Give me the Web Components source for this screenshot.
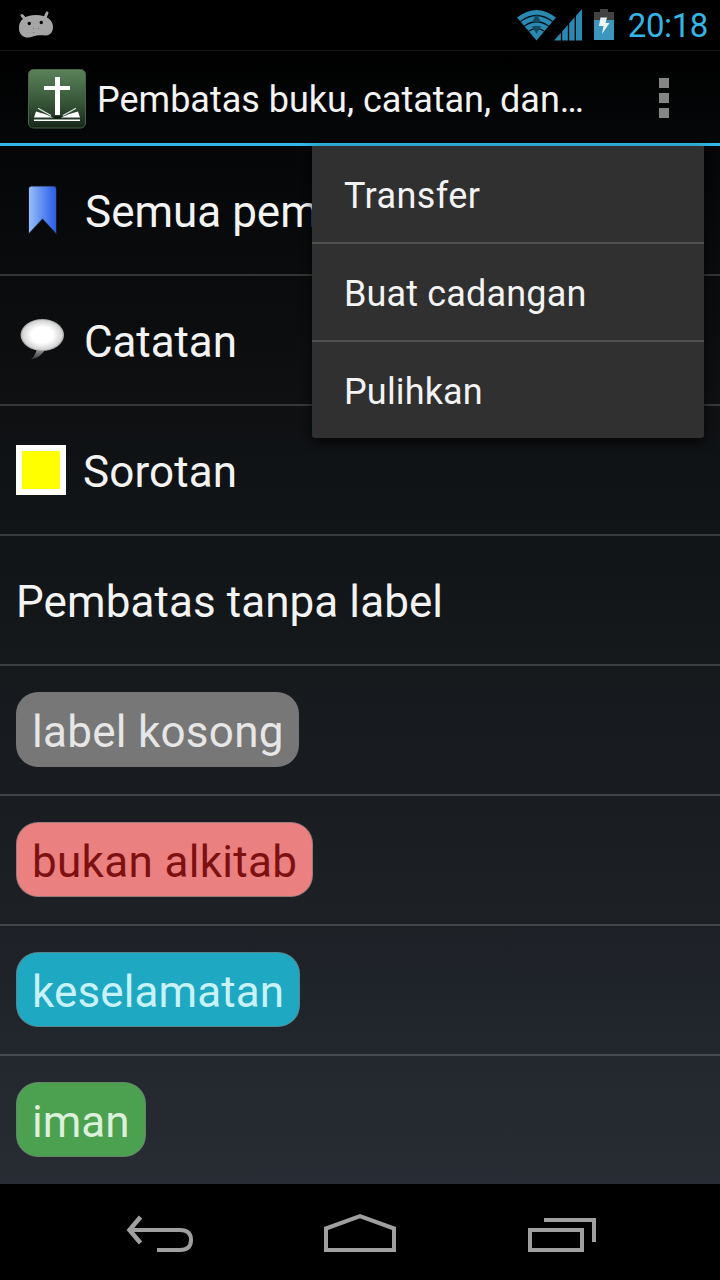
<!DOCTYPE html>
<html lang="id">
<head>
<meta charset="utf-8">
<title>Pembatas buku, catatan, dan sorotan</title>
<style>
html,body{margin:0;padding:0;background:#000}
body{width:720px;height:1280px;overflow:hidden;font-family:Roboto,"Noto Sans",sans-serif;color:#f3f3f3}
</style>
</head>
<body>
<bookmark-screen></bookmark-screen>
<script>
function define(name, html){
  const t=document.createElement('template');
  t.innerHTML=html;
  customElements.define(name,class extends HTMLElement{
    constructor(){super();this.attachShadow({mode:'open'}).append(t.content.cloneNode(true));}
  });
}

define('status-bar',`<style>
:host{display:flex;height:50px;align-items:flex-start;justify-content:space-between;background:#000;color:#33b5e5}
svg{display:block}
.right{display:flex}
time{font-size:33px;line-height:38px;margin:7px 12px 0 8px;letter-spacing:-.4px}
</style>
<svg width="60" height="50" viewBox="0 0 60 50"><g fill="#a5a5a5"><path d="M19 29C18.500 20 25 15 36 15C47 15 53 20 53 27C53 32 50 36 45 35.500C40 35 36 35.500 33 36.500C26 39.500 19.500 36 19 29Z"/><path d="M22 15.500L26 20M47 13L44.500 19" stroke="#a5a5a5" stroke-width="3" stroke-linecap="round"/></g><circle cx="29.300" cy="23.500" r="1.700"/><circle cx="41.300" cy="22.500" r="1.700"/><g fill="#777"><rect x="33" y="28" width="1" height="1"/><rect x="38" y="28" width="1" height="1"/><rect x="33" y="32" width="1" height="1"/></g></svg>
<div class="right">
<svg width="108" height="50" viewBox="512 0 108 50">
<path d="M517 17.500Q536.500 2.500 556 17.500L536.500 40.500Z" fill="#2989b1"/>
<g fill="none" stroke="#031017" stroke-width="1.300"><path d="M520.500 21.500Q536.500 9.500 552.500 21.500"/><path d="M524.500 26Q536.500 17.500 548.500 26"/><path d="M529 31Q536.500 26 544 31"/></g>
<path d="M536.500 14L541 22H532ZM532 26H541L536.500 34Z" fill="#144b62"/>
<path d="M554 40.500L582 9V40.500Z" fill="#2989b1"/><path d="M561.500 25V41M568.500 20V41M575.300 10V41" stroke="#000" stroke-width="1.300"/>
<path d="M600 9H608V12H614V20H594V12H600Z" fill="#424242"/><path d="M594 20H614V40H594Z" fill="#3d96bd"/><path d="M600.500 17.500H607L605.500 23H609.500L602 34L603.500 26H599Z" fill="#eef5f8"/>
</svg><time>20:18</time></div>`);

define('app-icon',`<style>:host{display:block;width:60px;height:62px;margin-top:4px}svg{display:block}</style>
<svg width="60" height="62" viewBox="27 68 60 62"><defs><linearGradient id="g" x2="0" y2="1"><stop offset="0" stop-color="#5a8259"/><stop offset=".5" stop-color="#3b5b3c"/><stop offset="1" stop-color="#182719"/></linearGradient></defs>
<rect x="28.500" y="69.500" width="57" height="58.500" rx="5" fill="url(#g)" stroke="#4b604b"/>
<path d="M55 77H60V86H70V90H60V115H55V90H44V86H55Z" fill="#fff"/>
<path d="M53 116.500H62L60 118.500H55Z" fill="#0c150c"/>
<path d="M36 111.500Q45 113.500 53 117.500H34ZM78 111.500Q69 113.500 61 117.500H80Z" fill="#fff"/><path d="M38 108.300L51 115.500M76 108.300L63 115.500" stroke="#dfe6df" stroke-width="1.300"/><path d="M34 120.300H80" stroke="#fff" stroke-width="1.500"/></svg>`);

define('action-bar',`<style>
:host{display:flex;box-sizing:border-box;height:96px;align-items:center;padding:0 50px 0 27px;border-top:1px solid #151515;border-bottom:3px solid #33b5e5;background:linear-gradient(#000,#050708)}
h1{flex:1;margin:6px 0 0 10px;font-size:36px;line-height:44px;font-weight:400;white-space:nowrap}
.more{display:grid;gap:5px;width:10px;margin:2px 1px 0 0}
.more i{width:10px;height:10px;background:#858585}
</style><app-icon></app-icon><h1><slot></slot></h1><div class="more"><i></i><i></i><i></i></div>`);

define('list-row',`<style>
:host{display:flex;box-sizing:border-box;height:130px;padding:0 16px;align-items:center;font-size:44px;line-height:52px;white-space:nowrap;border-bottom:2px solid #ffffff2b}
:host(:last-of-type){border-bottom-color:transparent}
.t{padding-top:4px}
</style><slot name="icon"></slot><span class="t"><slot></slot></span>`);

define('label-chip',`<style>
:host{display:block;box-sizing:border-box;height:75px;padding:13px 15px 0;margin:-5px 0 0;border:1px solid #777a;border-radius:22px;background:var(--bg);color:var(--fg);line-height:52px;width:var(--w)}
</style><slot></slot>`);

define('mark-icon',`<style>:host{display:block;width:69px;height:60px}svg{display:block}</style>
<svg width="68" height="60" viewBox="16 180 68 60"><defs><linearGradient id="b"><stop stop-color="#97bdf7"/><stop offset=".5" stop-color="#5c8bf2"/><stop offset="1" stop-color="#2e5ce6"/></linearGradient></defs><path d="M29 189Q29 186.500 31.500 186.500H53.500Q56 186.500 56 189V233L42.500 218.500L29 233Z" fill="url(#b)" stroke="#1b2230" stroke-width="1.500" paint-order="stroke"/></svg>`);
define('note-icon',`<style>:host{display:block;width:68px;height:60px}svg{display:block}</style>
<svg width="68" height="60" viewBox="16 310 68 60"><defs><radialGradient id="n"><stop offset=".5" stop-color="#fff"/><stop offset=".9" stop-color="#d4d4d4"/><stop offset="1" stop-color="#999"/></radialGradient><linearGradient id="t" x2="0" y2="1"><stop stop-color="#bbb"/><stop offset="1" stop-color="#333"/></linearGradient></defs><path d="M37 346Q37 354 31 359.500Q41 358 46 348Z" fill="url(#t)"/><ellipse cx="42.300" cy="335" rx="21.800" ry="16" fill="url(#n)"/></svg>`);
define('highlight-icon',`<style>:host{display:block;box-sizing:border-box;width:50px;height:50px;margin-right:17px;border:6px solid #fff;background:#ff0}</style>`);

define('overflow-menu',`<style>
:host{position:absolute;top:146px;right:16px;width:392px;background:#303030;border-radius:0 0 3px 3px;box-shadow:0 4px 10px #000a;font-size:36px;line-height:44px}
</style><slot></slot>`);
define('menu-entry',`<style>
:host{display:block;box-sizing:border-box;height:98px;padding:28px 32px;border-bottom:2px solid #505050;white-space:nowrap}
:host(:last-of-type){border:0;height:96px}
</style><slot></slot>`);

define('nav-bar',`<style>:host{display:grid;grid-template-columns:repeat(3,200px);justify-content:center;height:96px;background:#000}svg{display:block}</style>
<svg width="200" height="96" viewBox="60 1184 200 96"><g fill="none" stroke="#a0a0a0" stroke-width="4"><path d="M130 1230H180Q191 1230 191 1240T180 1250H157"/><path d="M140.500 1217L129.500 1230L140.500 1243" stroke-width="4.500"/></g></svg>
<svg width="200" height="96" viewBox="260 1184 200 96"><path d="M326 1250V1228.500L360 1216.200L394 1228.500V1250Z" fill="none" stroke="#a0a0a0" stroke-width="4"/></svg>
<svg width="200" height="96" viewBox="460 1184 200 96"><path d="M530 1230H582V1250H530ZM544 1220H594V1242" fill="none" stroke="#a0a0a0" stroke-width="4"/></svg>`);

define('bookmark-screen',`<style>
:host{display:flex;flex-direction:column;position:relative;width:720px;height:1280px;background:#000;overflow:hidden}
main{height:1038px;overflow:hidden;background:linear-gradient(#040607,#0e1012 25%,#15191c 50%,#1d2126 75%,#282d35)}
</style>
<status-bar></status-bar>
<action-bar>Pembatas buku, catatan, dan…</action-bar>
<main>
<list-row><mark-icon slot="icon"></mark-icon>Semua pem</list-row>
<list-row style="letter-spacing:-.1px"><note-icon slot="icon"></note-icon>Catatan</list-row>
<list-row style="letter-spacing:.1px"><highlight-icon slot="icon"></highlight-icon>Sorotan</list-row>
<list-row style="letter-spacing:.08px">Pembatas tanpa label</list-row>
<list-row><label-chip style="--bg:#777;--fg:#e6e6e6;--w:283px;letter-spacing:.27px">label kosong</label-chip></list-row>
<list-row><label-chip style="--bg:#eb8080;--fg:#7d1010;--w:297px;letter-spacing:.33px">bukan alkitab</label-chip></list-row>
<list-row><label-chip style="--bg:#1fa8c1;--fg:#c8f2fa;--w:284px;letter-spacing:.1px">keselamatan</label-chip></list-row>
<list-row><label-chip style="--bg:#4ca150;--fg:#dcf0dc;--w:130px">iman</label-chip></list-row>
</main>
<nav-bar></nav-bar>
<overflow-menu><menu-entry style="letter-spacing:.42px">Transfer</menu-entry><menu-entry style="letter-spacing:.16px">Buat cadangan</menu-entry><menu-entry style="letter-spacing:.16px">Pulihkan</menu-entry></overflow-menu>`);
</script>
</body>
</html>
